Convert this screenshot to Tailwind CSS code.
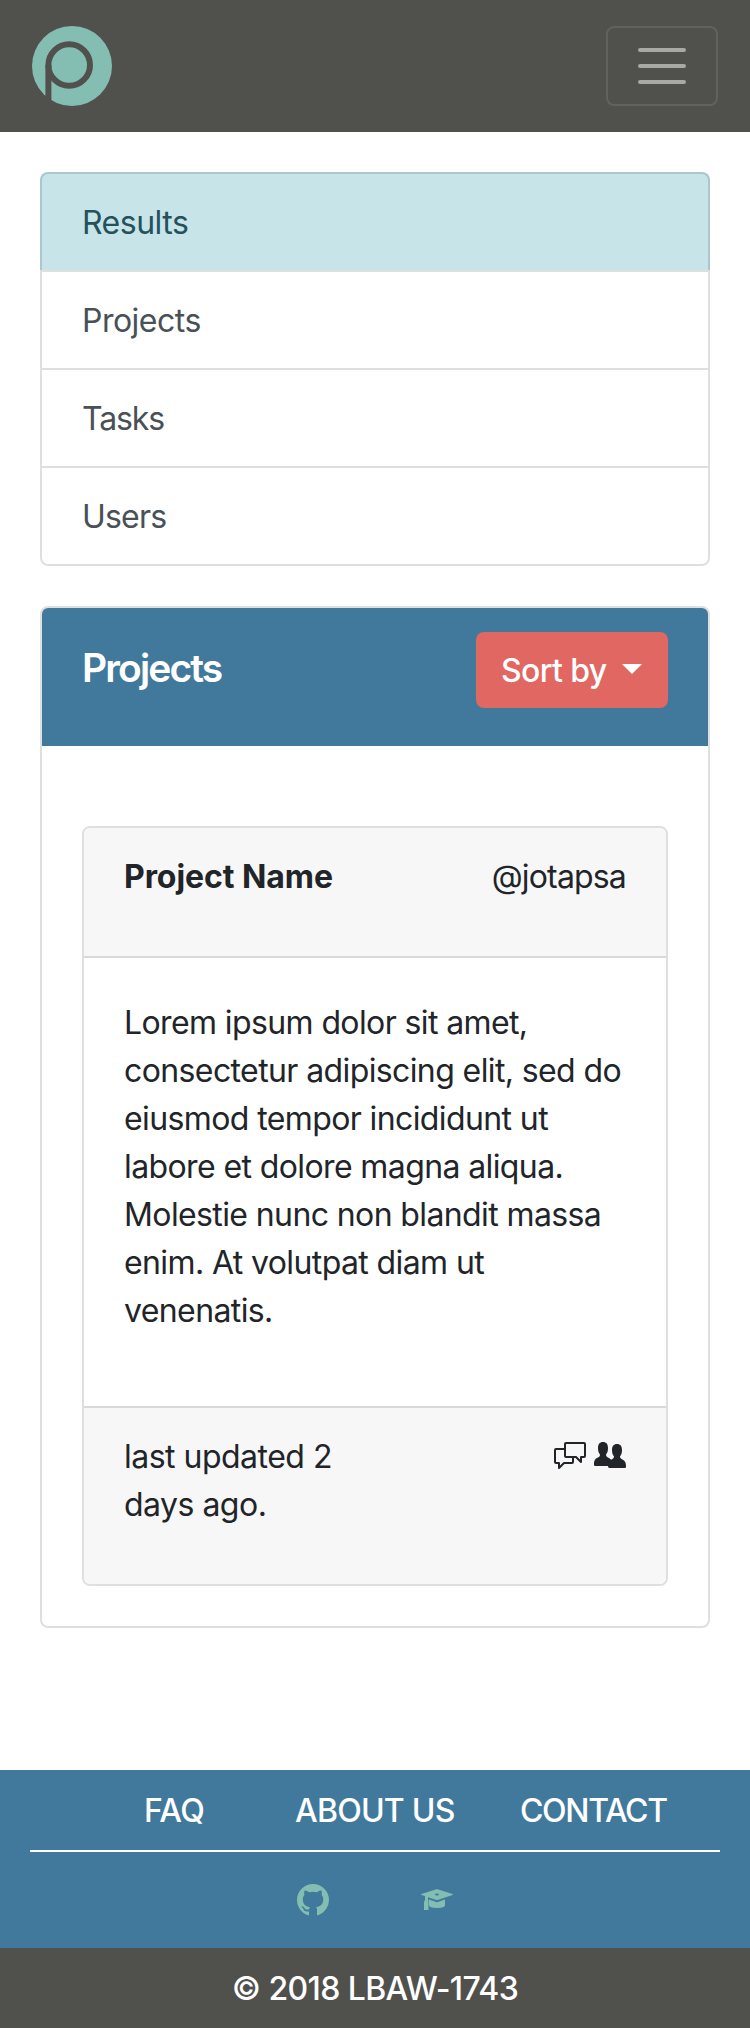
<!DOCTYPE html>
<html lang="en">
<head>
<meta charset="utf-8">
<title>Results</title>
<script src="https://cdn.jsdelivr.net/npm/@tailwindcss/browser@4"></script>
</head>
<body class="w-[750px] bg-white font-['Inter','Liberation_Sans',sans-serif] text-[32px] leading-[48px] tracking-[-0.019em] text-[#212529]">
<header class="flex h-[132px] items-center justify-between bg-[#50504d] px-8">
  <svg class="size-20" viewBox="0 0 80 80" fill="none">
    <circle cx="40" cy="40" r="40" fill="#84beb3"/>
    <circle cx="37.200" cy="39" r="20.800" stroke="#50504d" stroke-width="6"/>
    <path d="M16.400 80V39" stroke="#50504d" stroke-width="6"/>
  </svg>
  <button class="flex h-20 w-28 items-center justify-center rounded-lg border-2 border-[#61615f]" aria-label="Menu">
    <svg class="h-10 w-12" viewBox="0 0 48 40" stroke="#a8a8a6" stroke-width="4" stroke-linecap="round"><path d="M2 4h44M2 20h44M2 36h44"/></svg>
  </button>
</header>
<main class="px-10 pt-10">
  <nav>
    <a class="block h-[98px] rounded-t-lg border-2 border-b-0 border-[#abc6cc] bg-[#c7e4e9] px-10 pt-[25px] tracking-[-0.016em] text-[#24525c]">Results</a>
    <a class="block h-[98px] border-2 border-b-0 border-[#dfdfdf] px-10 pt-[25px] tracking-[-0.016em] text-[#495057]">Projects</a>
    <a class="block h-[98px] border-2 border-b-0 border-[#dfdfdf] px-10 pt-[25px] tracking-[-0.036em] text-[#495057]">Tasks</a>
    <a class="block h-[100px] rounded-b-lg border-2 border-[#dfdfdf] px-10 pt-[25px] tracking-[-0.025em] text-[#495057]">Users</a>
  </nav>
  <section class="mt-10 rounded-lg border-2 border-[#dfdfdf]">
    <div class="flex h-[138px] items-start justify-between rounded-t-md bg-[#41799c] px-10 pt-6 text-white">
      <h2 class="mt-3 text-[39px] font-semibold tracking-[-0.048em]">Projects</h2>
      <button class="flex h-19 w-48 items-center rounded-lg bg-[#e16862] pt-0.5 pl-[25px] font-medium tracking-[-0.02em]">Sort by<span class="-mt-1 ml-4 border-x-[10px] border-t-[10px] border-x-transparent border-t-white"></span></button>
    </div>
    <div class="px-10 pt-20 pb-10">
      <article class="rounded-lg border-2 border-[#dfdfdf]">
        <div class="flex h-[130px] justify-between rounded-t-md border-b-2 border-[#d9d9d9] bg-[#f7f7f7] px-10 pt-[25px]">
          <strong class="font-bold tracking-[-0.002em]">Project Name</strong><span class="tracking-[-0.026em]">@jotapsa</span>
        </div>
        <p class="h-[448px] pt-[41px] pl-10 whitespace-nowrap">Lorem ipsum dolor sit amet,<br>consectetur adipiscing elit, sed do<br>eiusmod tempor incididunt ut<br>labore et dolore magna aliqua.<br>Molestie nunc non blandit massa<br>enim. At volutpat diam ut<br>venenatis.</p>
        <div class="flex h-[178px] justify-between rounded-b-md border-t-2 border-[#d9d9d9] bg-[#f7f7f7] px-10 pt-6">
          <p class="pt-px tracking-[-0.016em] whitespace-nowrap">last updated 2<br>days ago.</p>
          <div class="flex gap-2 pt-[10px]">
            <svg class="h-7 w-8" viewBox="0 0 32 28" fill="none" stroke="#212529" stroke-width="2" stroke-linejoin="round">
              <path d="M10 7H2Q1 7 1 8V20Q1 21 2 21H5V26L10 21H18Q19 21 19 20V16"/>
              <path d="M12 1H30Q31 1 31 2V14Q31 15 30 15H27V20L22 15H12Q11 15 11 14V2Q11 1 12 1Z"/>
            </svg>
            <svg class="h-7 w-8" viewBox="0 0 32 28" fill="#212529">
              <path d="M9 0c3.400 0 5 2.300 5 6 0 3-.7 5.200-2 6.500 0 2.300 1.500 2.700 3 3.500 2 1 3 2.700 3 5.500L15 24H1c-1 0-1-1-1-2 0-4.500 2-5.600 4-6.500 1.500-.8 2-1.300 2-3C4.700 11.200 4 9 4 6c0-3.700 1.600-6 5-6Z"/>
              <path d="M23 2c3.400 0 5 2.300 5 6 0 3-.7 5-2 6.300 0 2 1 2.500 2.500 3.200 2 1 3.500 2.500 3.500 6.500 0 1 0 2-1 2H15.500c-1 0-1.500-1-1.500-2 0-4 1.500-5.500 3.500-6.500 1.500-.7 2.500-1.200 2.500-3.200C18.700 13 18 11 18 8c0-3.700 1.600-6 5-6Z"/>
            </svg>
          </div>
        </div>
      </article>
    </div>
  </section>
</main>
<footer class="mt-[142px] text-white">
  <div class="h-[178px] bg-[#41799c] px-[30px]">
    <div class="flex h-[82px] border-b-2 border-white pt-[17px] pl-[114px] font-medium">
      <a class="w-[151px]">FAQ</a><a class="w-[225px] tracking-[-0.024em]">ABOUT US</a><a class="tracking-[-0.042em]">CONTACT</a>
    </div>
    <div class="flex justify-center gap-[92px] pt-8">
      <svg class="size-8" viewBox="0 0 16 16" fill="#84beb3"><path d="M8 0C3.580 0 0 3.580 0 8c0 3.540 2.290 6.530 5.470 7.590.4.070.55-.17.55-.38 0-.19-.01-.82-.01-1.490-2.010.37-2.530-.49-2.690-.94-.09-.23-.48-.94-.82-1.130-.28-.15-.68-.52-.01-.53.63-.01 1.080.58 1.230.82.72 1.210 1.870.87 2.330.66.070-.52.28-.87.51-1.070-1.780-.2-3.640-.89-3.640-3.950 0-.87.31-1.590.82-2.150-.08-.2-.36-1.020.08-2.120 0 0 .67-.21 2.200.82.64-.18 1.320-.27 2-.27s1.360.09 2 .27c1.530-1.040 2.200-.82 2.200-.82.44 1.100.16 1.920.08 2.120.51.56.82 1.270.82 2.150 0 3.070-1.870 3.750-3.650 3.950.29.25.54.73.54 1.480 0 1.070-.01 1.930-.01 2.200 0 .21.15.46.55.38A8.010 8.010 0 0 0 16 8c0-4.420-3.580-8-8-8Z"/></svg>
      <svg class="size-8" viewBox="0 0 32 32" fill="#84beb3"><path fill-rule="evenodd" d="M15.500 5.200Q16 5 16.500 5.200L31.500 10Q32.500 10.500 31.500 11L16.500 16Q16 16.200 15.500 16L7 13.200V15L7.500 17V26H3V18L4 16V12L.5 11Q-.5 10.500 .5 10ZM14 10.500A2 1 0 1 0 18 10.500A2 1 0 1 0 14 10.500Z"/><path d="M8 15.500L15 18Q16 18.300 17 18L24 15.500V21Q24 24 16 24T8 21Z"/></svg>
    </div>
  </div>
  <div class="h-20 bg-[#50504d] pt-[17px] text-center font-medium">© 2018 LBAW-1743</div>
</footer>
</body>
</html>
